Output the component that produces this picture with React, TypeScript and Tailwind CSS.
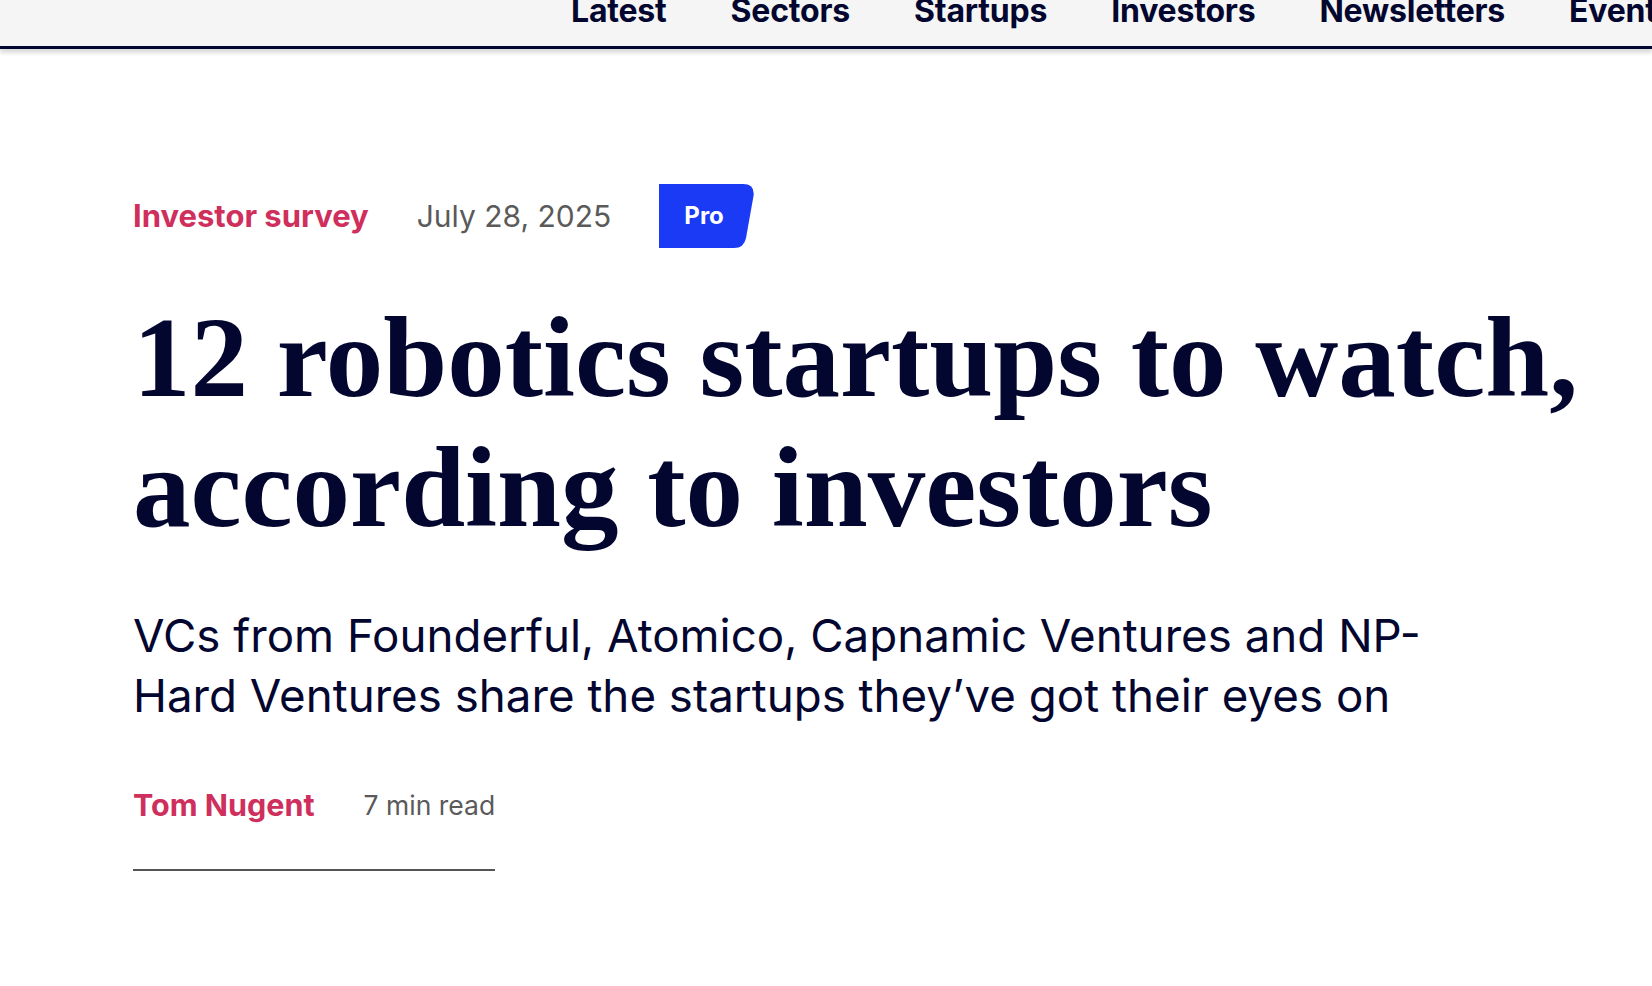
const navItems = ['Latest', 'Sectors', 'Startups', 'Investors', 'Newsletters', 'Events']

function ProBadge() {
  return (
    <div className="relative flex h-[64px] w-[95px] items-center">
      <svg className="absolute inset-0" width="95" height="64" viewBox="0 0 95 64">
        <path d="M0 0 H84 Q96 0 94.5 12 L87 54 Q85 64 75 64 H0 Z" fill="#1b3af6" />
      </svg>
      <span className="relative pl-[25px] text-[24px] font-bold leading-none text-white">Pro</span>
    </div>
  )
}

export default function App() {
  return (
    <div className="min-h-[986px] bg-white font-['Inter','Liberation_Sans',sans-serif] text-[#03062f]">
      <header className="relative h-[49px] overflow-hidden border-b-[3px] border-[#03062f] bg-[#f4f5f4] shadow-[0_4px_4px_rgba(0,0,0,0.14)]">
        <nav className="-mt-[5px] flex items-start gap-[64px] whitespace-nowrap pl-[571px]">
          {navItems.map((item) => (
            <span key={item} className="text-[32px] font-bold leading-[32px] tracking-[-0.2px] text-[#03062f]">
              {item}
            </span>
          ))}
        </nav>
      </header>

      <main className="pl-[133px] pt-[135px]">
        <div className="flex items-center gap-[48px]">
          <span className="text-[31px] font-bold leading-[36px] text-[#cf2f5c]">Investor survey</span>
          <span className="text-[30px] leading-[36px] text-[#5a5a5a]">July 28, 2025</span>
          <ProBadge />
        </div>

        <h1 className="mt-[45px] w-[1490px] font-['Liberation_Serif','Times_New_Roman',serif] text-[115px] font-bold leading-[130px] text-[#03062f]">
          12 robotics startups to watch, according to investors
        </h1>

        <p className="mt-[53px] w-[1330px] text-[45.7px] leading-[60px] text-[#03062f]">
          VCs from Founderful, Atomico, Capnamic Ventures and NP-Hard Ventures share the startups they’ve got their eyes on
        </p>

        <div className="mt-[61px] inline-flex items-center gap-[49px] border-b-2 border-[#555] pb-[46px]">
          <span className="text-[30.5px] font-bold leading-[36px] text-[#cf2f5c]">Tom Nugent</span>
          <span className="text-[26.5px] leading-[36px] text-[#5a5a5a]">7 min read</span>
        </div>
      </main>
    </div>
  )
}
